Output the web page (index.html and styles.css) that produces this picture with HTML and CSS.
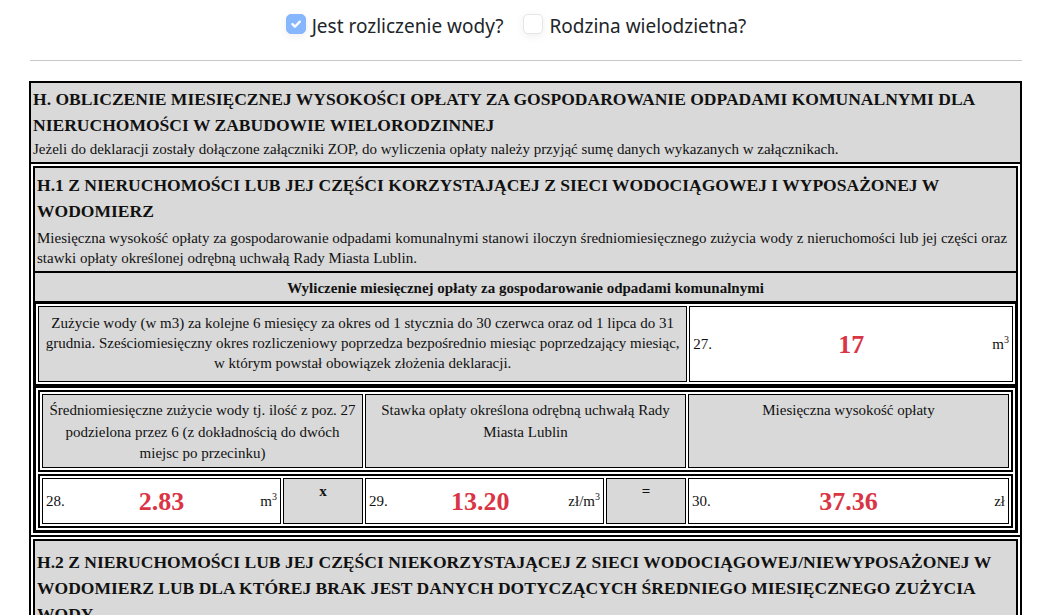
FILE: index.html
```html
<!DOCTYPE html>
<html lang="pl">
<head>
<meta charset="utf-8">
<title>Deklaracja – część H</title>
<link rel="stylesheet" href="styles.css">
</head>
<body>
<div class="page">
  <div class="checks">
    <label class="check">
      <span class="box box-on"><svg viewBox="0 0 20 20" width="20" height="20"><path d="M6 10.2l2.8 2.8 5.4-5.6" fill="none" stroke="#fff" stroke-width="2.6" stroke-linecap="round" stroke-linejoin="round"/></svg></span>
      <span class="check-label">Jest rozliczenie wody?</span>
    </label>
    <label class="check">
      <span class="box"></span>
      <span class="check-label">Rodzina wielodzietna?</span>
    </label>
  </div>
  <hr class="rule">

  <div class="sheet">
    <div class="cell grey head head-top">
      <div class="title">H. OBLICZENIE MIESIĘCZNEJ WYSOKOŚCI OPŁATY ZA GOSPODAROWANIE ODPADAMI KOMUNALNYMI DLA NIERUCHOMOŚCI W ZABUDOWIE WIELORODZINNEJ</div>
      <div class="desc">Jeżeli do deklaracji zostały dołączone załączniki ZOP, do wyliczenia opłaty należy przyjąć sumę danych wykazanych w załącznikach.</div>
    </div>

    <div class="wrap">
      <div class="tbl">
        <div class="cell grey head">
          <div class="title title-gap">H.1 Z NIERUCHOMOŚCI LUB JEJ CZĘŚCI KORZYSTAJĄCEJ Z SIECI WODOCIĄGOWEJ I WYPOSAŻONEJ W WODOMIERZ</div>
          <div class="desc">Miesięczna wysokość opłaty za gospodarowanie odpadami komunalnymi stanowi iloczyn średniomiesięcznego zużycia wody z nieruchomości lub jej części oraz stawki opłaty określonej odrębną uchwałą Rady Miasta Lublin.</div>
        </div>
        <div class="cell grey caption">Wyliczenie miesięcznej opłaty za gospodarowanie odpadami komunalnymi</div>

        <div class="row-cell">
          <div class="spaced grid3">
            <div class="cell grey info span2">Zużycie wody (w m3) za kolejne 6 miesięcy za okres od 1 stycznia do 30 czerwca oraz od 1 lipca do 31 grudnia. Sześciomiesięczny okres rozliczeniowy poprzedza bezpośrednio miesiąc poprzedzający miesiąc, w którym powstał obowiązek złożenia deklaracji.</div>
            <div class="cell val">
              <span class="pos">27.</span><span class="num">17</span><span class="unit">m<sup>3</sup></span>
            </div>
          </div>
        </div>

        <div class="row-cell">
          <div class="spaced stack">
            <div class="row-cell">
              <div class="spaced grid3">
                <div class="cell grey colhead">Średniomiesięczne zużycie wody tj. ilość z poz. 27 podzielona przez 6 (z dokładnością do dwóch miejsc po przecinku)</div>
                <div class="cell grey colhead">Stawka opłaty określona odrębną uchwałą Rady Miasta Lublin</div>
                <div class="cell grey colhead">Miesięczna wysokość opłaty</div>
              </div>
            </div>
            <div class="row-cell">
              <div class="spaced grid3">
                <div class="pair">
                  <div class="cell val">
                    <span class="pos">28.</span><span class="num">2.83</span><span class="unit">m<sup>3</sup></span>
                  </div>
                  <div class="cell grey op">x</div>
                </div>
                <div class="pair">
                  <div class="cell val">
                    <span class="pos">29.</span><span class="num">13.20</span><span class="unit">zł/m<sup>3</sup></span>
                  </div>
                  <div class="cell grey op">=</div>
                </div>
                <div class="cell val">
                  <span class="pos">30.</span><span class="num">37.36</span><span class="unit">zł</span>
                </div>
              </div>
            </div>
          </div>
        </div>
      </div>
    </div>

    <div class="wrap">
      <div class="tbl">
        <div class="cell grey head head-low">
          <div class="title title-gap">H.2 Z NIERUCHOMOŚCI LUB JEJ CZĘŚCI NIEKORZYSTAJĄCEJ Z SIECI WODOCIĄGOWEJ/NIEWYPOSAŻONEJ W WODOMIERZ LUB DLA KTÓREJ BRAK JEST DANYCH DOTYCZĄCYCH ŚREDNIEGO MIESIĘCZNEGO ZUŻYCIA WODY</div>
          <div class="desc">Miesięczna wysokość opłaty za gospodarowanie odpadami komunalnymi stanowi iloczyn liczby mieszkańców zamieszkujących nieruchomość oraz stawki opłaty określonej odrębną uchwałą Rady Miasta Lublin.</div>
        </div>
      </div>
    </div>
  </div>
</div>
</body>
</html>
```

FILE: styles.css
```css
* { box-sizing: border-box; }

body {
  margin: 0;
  background: #fff;
  color: #111;
  font-family: "Liberation Serif", "Times New Roman", serif;
  font-size: 15px;
}

.page {
  width: 993px;
  margin-left: 29px;
}

/* top checkboxes */
.checks {
  display: flex;
  justify-content: center;
  padding-top: 11px;
}

.check {
  display: flex;
  align-items: flex-start;
  margin-right: 19px;
  font-family: "Noto Sans", "Open Sans", sans-serif;
  font-size: 19px;
  line-height: 30px;
  color: #212529;
}

.check + .check { margin-left: 1px; }

.box {
  width: 20px;
  height: 20px;
  margin-top: 3px;
  margin-right: 6px;
  border-radius: 5px;
  border: 1px solid #e6e6e6;
  background: #fff;
  box-shadow: 0 2px 8px rgba(0, 0, 0, 0.07);
  display: flex;
  align-items: center;
  justify-content: center;
}

.box svg { display: block; }

.box-on {
  background: #86b7fe;
  border-color: #86b7fe;
}

.rule {
  border: 0;
  border-top: 1px solid #c9c9c9;
  margin: 19px 0 20px 1px;
}

/* the form sheet */
.sheet {
  border: 1px solid #000;
  background: #fff;
  display: flex;
  flex-direction: column;
}

.cell {
  border: 1px solid #000;
}

.grey { background: #d9d9d9; }

.wrap {
  border: 1px solid #000;
  padding: 2px;
}

.tbl {
  border: 1px solid #000;
  display: flex;
  flex-direction: column;
}

.row-cell {
  border: 1px solid #000;
}

.spaced {
  border: 1px solid #000;
  padding: 2px;
  gap: 2px;
  background: #fff;
}

.grid3 {
  display: grid;
  grid-template-columns: repeat(3, 1fr);
}

.stack {
  display: flex;
  flex-direction: column;
}

.span2 { grid-column: span 2; }

.head {
  padding: 4px 2px 3px;
}

.head-top {
  padding: 3px 2px 3px;
}

.head-low {
  padding-top: 8px;
}

.title {
  font-size: 17.55px;
  line-height: 26.3px;
  font-weight: bold;
}

.title-gap {
  margin-bottom: 4px;
}

.desc {
  font-size: 15px;
  line-height: 20px;
}

.caption {
  font-size: 15px;
  line-height: 20px;
  font-weight: bold;
  text-align: center;
  padding: 5px 2px 3px;
}

.info {
  font-size: 15px;
  line-height: 20px;
  text-align: center;
  padding: 6px 2px 8px;
}

.colhead {
  font-size: 15px;
  line-height: 21.5px;
  text-align: center;
  padding: 5px 3px 2px;
}

.pair {
  display: grid;
  grid-template-columns: 1fr 80px;
  gap: 2px;
}

.val {
  background: #fff;
  display: flex;
  align-items: center;
  padding: 4px 3px 3px;
  font-size: 15px;
  line-height: 21px;
}

.pos {
  flex: 0 0 10%;
}

.num {
  flex: 1 1 0;
  text-align: center;
  font-size: 26px;
  line-height: 37px;
  font-weight: bold;
  color: #d93545;
}

.unit {
  flex: 0 0 auto;
  min-width: 10%;
  text-align: right;
  white-space: nowrap;
}

.unit sup {
  font-size: 10px;
  line-height: 0;
  vertical-align: 6px;
}

.op {
  font-size: 15px;
  line-height: 21px;
  font-weight: bold;
  text-align: center;
  padding-top: 2px;
}
```
